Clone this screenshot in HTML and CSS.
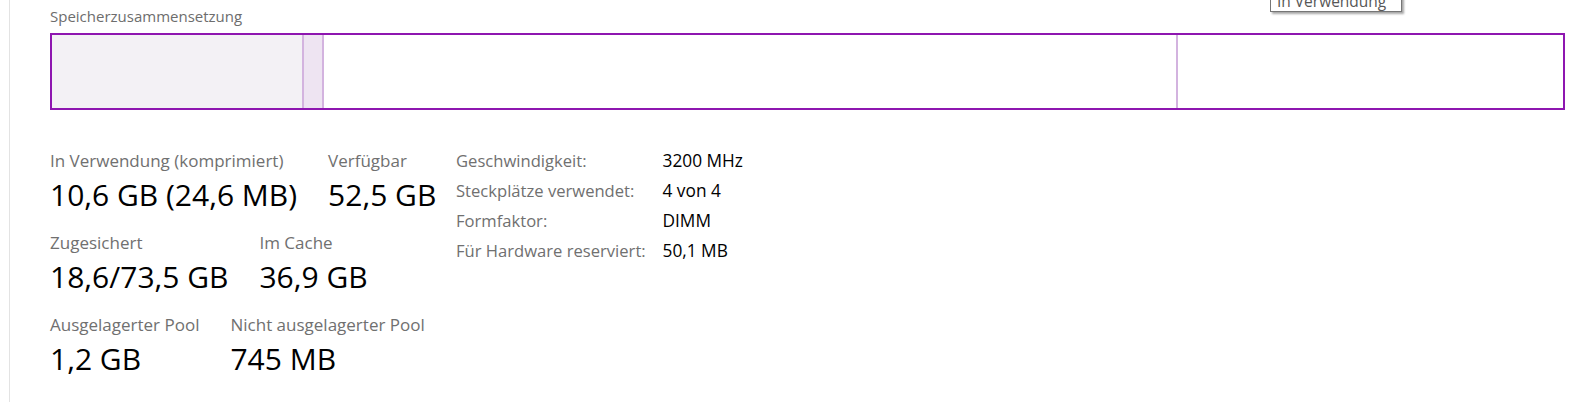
FILE: index.html
```html
<!DOCTYPE html>
<html lang="de">
<head>
<meta charset="utf-8">
<title>Arbeitsspeicher</title>
<link rel="stylesheet" href="styles.css">
</head>
<body>
<div class="page">
  <div class="rail"></div>
  <main class="content">
    <div class="caption">Speicherzusammensetzung</div>
    <div class="bar">
      <div class="seg seg-used"></div>
      <div class="seg seg-modified"></div>
      <div class="seg seg-standby"></div>
      <div class="seg seg-free"></div>
    </div>
    <div class="stats">
      <div class="stat-grid">
        <div class="stat-row">
          <div class="stat"><div class="label">In Verwendung (komprimiert)</div><div class="value">10,6 GB (24,6 MB)</div></div>
          <div class="stat"><div class="label">Verfügbar</div><div class="value">52,5 GB</div></div>
        </div>
        <div class="stat-row">
          <div class="stat"><div class="label">Zugesichert</div><div class="value">18,6/73,5 GB</div></div>
          <div class="stat"><div class="label">Im Cache</div><div class="value">36,9 GB</div></div>
        </div>
        <div class="stat-row">
          <div class="stat"><div class="label">Ausgelagerter Pool</div><div class="value">1,2 GB</div></div>
          <div class="stat"><div class="label">Nicht ausgelagerter Pool</div><div class="value">745 MB</div></div>
        </div>
      </div>
      <div class="details">
        <div class="dlabel">Geschwindigkeit:</div><div class="dvalue">3200 MHz</div>
        <div class="dlabel">Steckplätze verwendet:</div><div class="dvalue">4 von 4</div>
        <div class="dlabel">Formfaktor:</div><div class="dvalue">DIMM</div>
        <div class="dlabel">Für Hardware reserviert:</div><div class="dvalue">50,1 MB</div>
      </div>
    </div>
  </main>
  <div class="tooltip">In Verwendung</div>
</div>
</body>
</html>
```

FILE: styles.css
```css
html, body {
  margin: 0;
  padding: 0;
  background: #ffffff;
}
body {
  font-family: "Open Sans", "Noto Sans", "Liberation Sans", sans-serif;
  color: #000;
}
.page {
  position: relative;
  display: flex;
  width: 1586px;
  height: 402px;
  overflow: hidden;
}
.rail {
  width: 1px;
  margin-left: 9px;
  background: #e3e3e3;
  flex: none;
}
.content {
  flex: 1;
  padding: 0 21px 0 40px;
}
.caption {
  font-size: 15px;
  line-height: 20px;
  color: #6d6d6d;
  padding-top: 6px;
  height: 33px;
  box-sizing: border-box;
  white-space: nowrap;
}
.bar {
  display: flex;
  height: 77px;
  border: 2px solid #8e16b0;
  box-sizing: border-box;
}
.seg {
  height: 100%;
  box-sizing: border-box;
}
.seg-used {
  width: 252px;
  background: #f3f1f5;
  border-right: 2px solid #d3b3df;
}
.seg-modified {
  width: 20px;
  background: #eee4f2;
  border-right: 2px solid #d3b3df;
}
.seg-standby {
  width: 854px;
  background: #ffffff;
  border-right: 2px solid #d3b3df;
}
.seg-free {
  flex: 1;
  background: #ffffff;
}
.stats {
  display: flex;
  margin-top: 41px;
}
.stat-grid {
  width: 406px;
  flex: none;
  display: flex;
  flex-direction: column;
}
.stat-row {
  display: flex;
  gap: 31px;
  height: 82px;
}
.label {
  font-size: 17px;
  line-height: 20px;
  color: #707070;
  white-space: nowrap;
}
.value {
  font-size: 30px;
  line-height: 40px;
  margin-top: 4px;
  color: #000;
  white-space: nowrap;
}
.details {
  display: grid;
  grid-template-columns: 206.5px auto;
  grid-auto-rows: 30px;
  align-content: start;
}
.dlabel {
  font-size: 16.6px;
  line-height: 20px;
  color: #707070;
  white-space: nowrap;
}
.dvalue {
  font-size: 17.3px;
  line-height: 20px;
  color: #000;
  white-space: nowrap;
}
.tooltip {
  position: absolute;
  left: 1270px;
  top: -8px;
  width: 132px;
  height: 20px;
  box-sizing: border-box;
  border: 1px solid #767676;
  background: #fff;
  box-shadow: 2px 2px 2px rgba(0, 0, 0, 0.35);
  font-size: 15.5px;
  line-height: 16px;
  color: #575757;
  padding-left: 6px;
  white-space: nowrap;
}
```
